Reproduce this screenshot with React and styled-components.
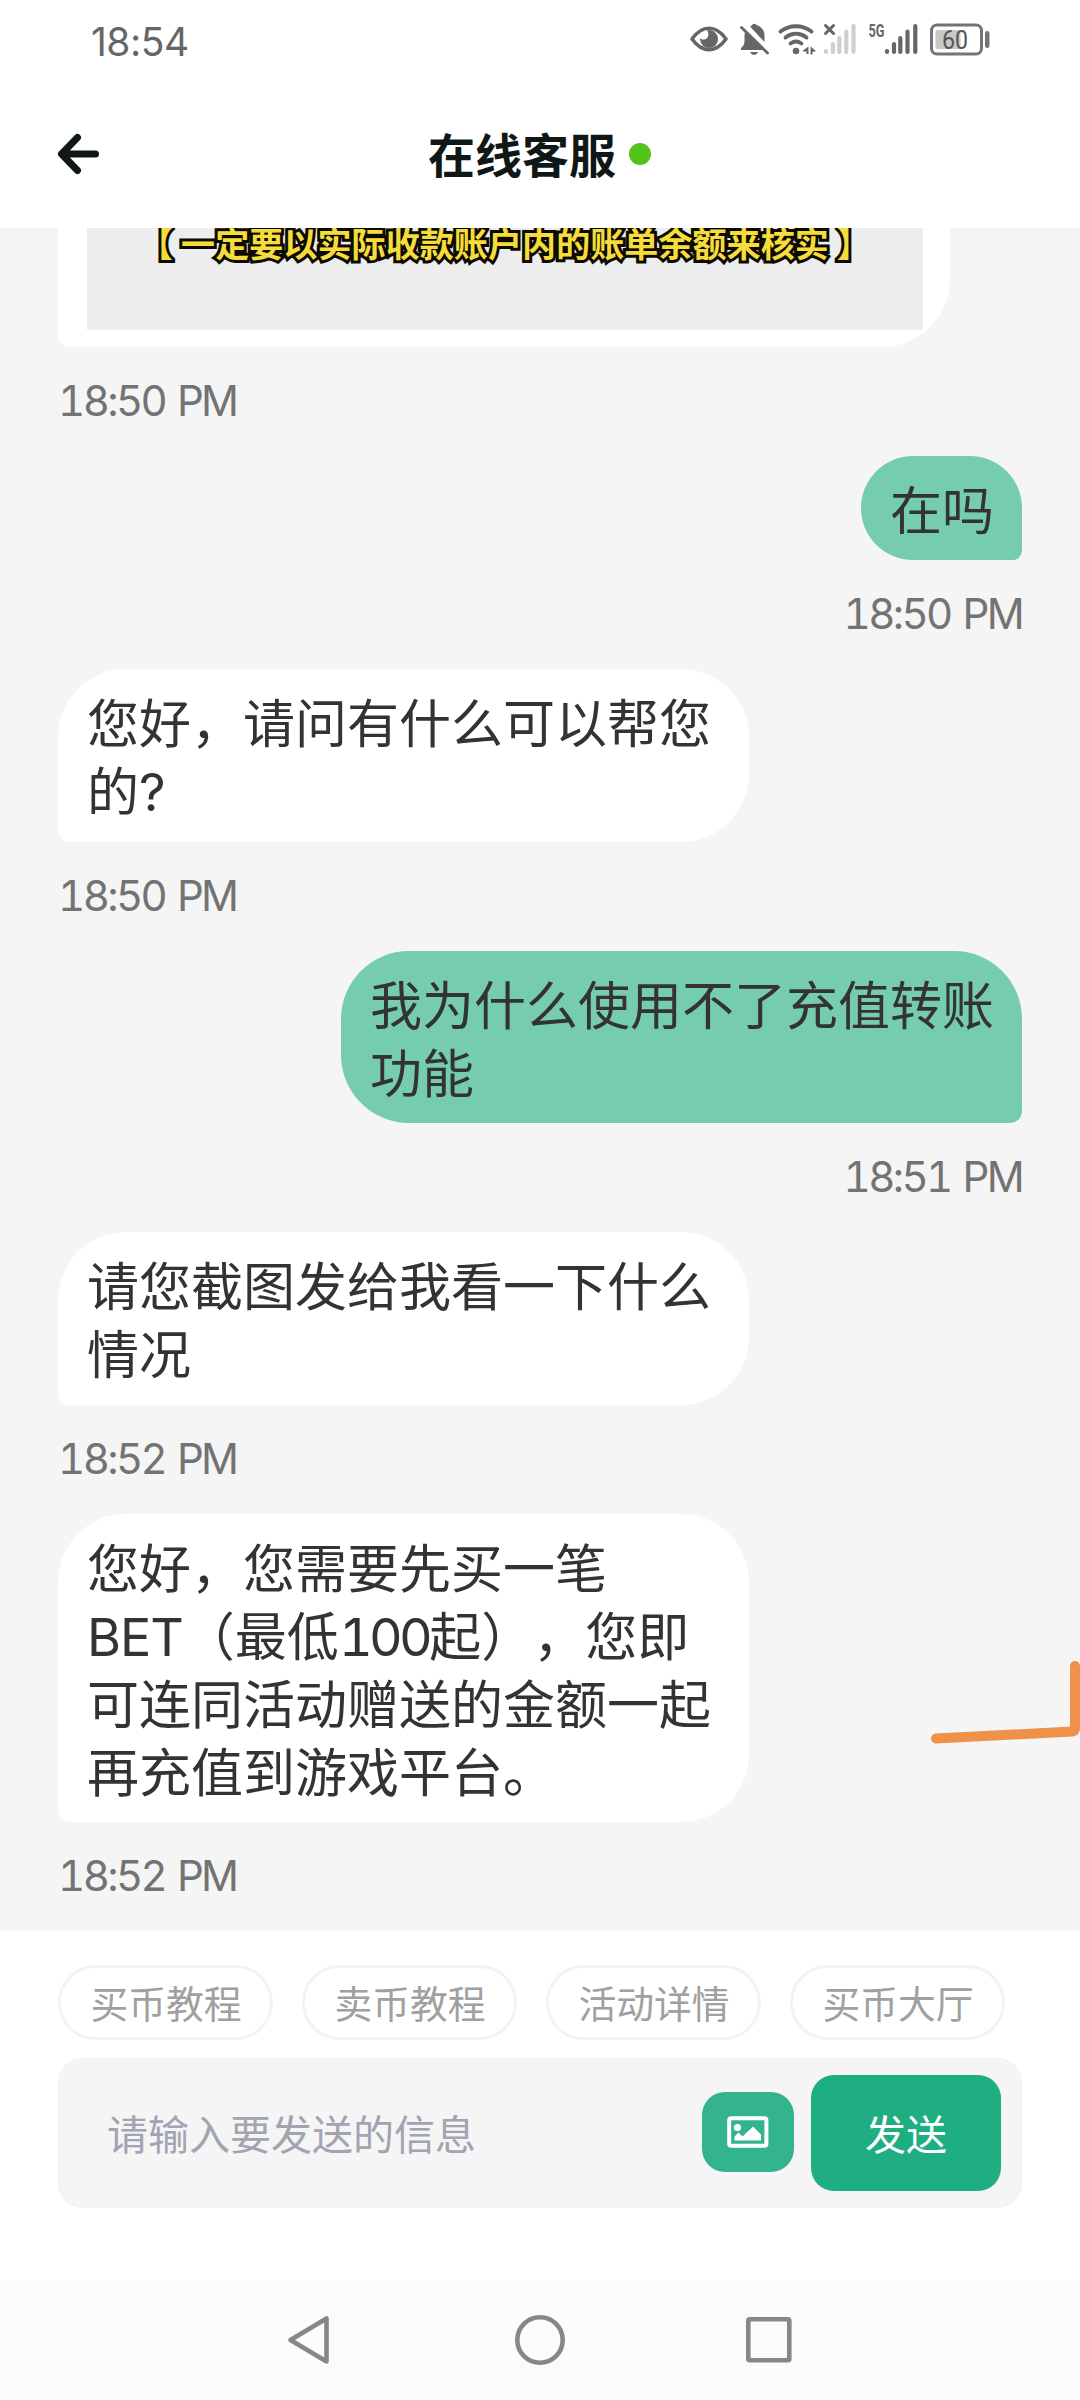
import React from "react";
import styled, { createGlobalStyle } from "styled-components";

const messages = [
  { id: 1, mine: false, caption: true, time: "18:50 PM" },
  { id: 2, mine: true, lines: ["在吗"], time: "18:50 PM" },
  {
    id: 3,
    mine: false,
    lines: ["您好，请问有什么可以帮您", "的?"],
    time: "18:50 PM",
  },
  {
    id: 4,
    mine: true,
    lines: ["我为什么使用不了充值转账", "功能"],
    time: "18:51 PM",
  },
  {
    id: 5,
    mine: false,
    lines: ["请您截图发给我看一下什么", "情况"],
    time: "18:52 PM",
  },
  {
    id: 6,
    mine: false,
    lines: [
      "您好，您需要先买一笔",
      "BET（最低100起），您即",
      "可连同活动赠送的金额一起",
      "再充值到游戏平台。",
    ],
    time: "18:52 PM",
  },
];

const shortcuts = ["买币教程", "卖币教程", "活动详情", "买币大厅"];

// latin runs use their own face, the rest stays in the CJK one
const renderLine = (line) =>
  line.split(/([A-Z0-9?]+)/).map((part, i) =>
    i % 2 ? (
      <Latin key={i} $digits={/\d/.test(part)}>
        {part}
      </Latin>
    ) : (
      part
    )
  );

const StatusIcons = () => (
  <Icons>
    <svg width="50" height="34" viewBox="690 22 50 34">
      <path
        d="M692 39c5-7 10.500-10.700 17-10.700s12 3.700 17 10.700c-5 7-10.500 10.700-17 10.700s-12-3.700-17-10.700z"
        fill="none"
        stroke="#666"
        strokeWidth="3.600"
        strokeLinejoin="round"
      />
      <path
        d="M707 30.500c3 4 1 8.500-3 9-2 .2-3.500-.6-4-1.500 0 6 4 10 9 10s9-4 9-9-4-9-9-9z"
        fill="#666"
      />
    </svg>
    <svg width="38" height="34" viewBox="740 22 38 34">
      <path
        d="M750 26.500c1-.5 1.500-.6 2-1.500 1.500-1.600 3-1.600 4.500 0 5 1.500 8 5.500 8 11v6zM745.500 31.500 763.500 50H741v-2c2.500-2 3.500-4 3.500-7v-5c0-2 .3-3 1-4.500zM750 52h8c-1 2-2.500 2.800-4 2.800S751 54 750 52z"
        fill="#666"
      />
      <path
        d="m741.500 27.500 26 25.500"
        stroke="#666"
        strokeWidth="2.800"
        strokeLinecap="round"
      />
    </svg>
    <svg width="45" height="34" viewBox="778 22 45 34">
      <g fill="none" stroke="#666" strokeWidth="3.800" strokeLinecap="round">
        <path d="M780.500 31.500c9-7 22-7 31 0" />
        <path d="M785.500 37.500c6.500-5 14.500-5 21 0" />
        <path d="M790.500 43.500c3.500-2.500 7.500-2.500 11 0" />
      </g>
      <circle cx="796" cy="51" r="3.300" fill="#666" />
      <path
        d="M808.500 46.500v7.500h-2v-2.500h-3.500v-1zM810.500 46.500l5.500 4.500-3.500 1v2.500h-2z"
        fill="#666"
      />
    </svg>
    <svg width="45" height="34" viewBox="823 22 45 34">
      <path
        d="m825.500 25.500 8 8m0-8-8 8"
        stroke="#666"
        strokeWidth="3"
        strokeLinecap="round"
      />
      <path
        d="M826 51v1M833 44v8M839.300 38v14M846.300 31.500v20.500M853.500 26v26"
        stroke="#cfcfcf"
        strokeWidth="4.200"
        strokeLinecap="round"
      />
    </svg>
    <svg width="62" height="34" viewBox="868 22 62 34">
      <text
        x="868.500"
        y="37"
        fontFamily="Roboto, sans-serif"
        fontSize="18"
        fontWeight="700"
        fill="#666"
        textLength="16"
        lengthAdjust="spacingAndGlyphs"
      >
        5G
      </text>
      <path
        d="M887 51v1M894 44v8M900.300 38v14M907.500 31.500v20.500M915.300 26v26"
        stroke="#666"
        strokeWidth="4.200"
        strokeLinecap="round"
      />
    </svg>
    <svg width="60" height="34" viewBox="930 22 60 34">
      <rect
        x="931.500"
        y="25"
        width="50"
        height="29"
        rx="5.500"
        fill="none"
        stroke="#747474"
        strokeWidth="3"
      />
      <rect x="935.500" y="30" width="25" height="19" rx="2" fill="#c8c8c8" />
      <rect x="985" y="31" width="4.500" height="17" rx="2.200" fill="#747474" />
      <text
        x="942"
        y="49"
        fontFamily="Roboto, sans-serif"
        fontSize="25"
        fill="#555"
        textLength="26"
        lengthAdjust="spacingAndGlyphs"
      >
        60
      </text>
    </svg>
  </Icons>
);

const App = () => {
  return (
    <Page>
      <GlobalStyle />
      <StatusBar>
        <Clock>18:54</Clock>
        <StatusIcons />
      </StatusBar>
      <Header>
        <BackButton type="button">
          <svg width="44" height="42" viewBox="0 0 44 42">
            <path
              d="M38.500 21H5M20.500 4.500 4.500 21l16 16.500"
              fill="none"
              stroke="#101817"
              strokeWidth="7"
              strokeLinecap="round"
              strokeLinejoin="round"
            />
          </svg>
        </BackButton>
        <Title>在线客服</Title>
        <OnlineDot />
      </Header>
      <Chat>
        {messages.map(({ id, mine, caption, lines, time }) => (
          <Message key={id} $mine={mine}>
            {caption ? (
              <PictureBubble>
                <Picture>
                  <Bracket>【</Bracket>
                  一定要以实际收款账户内的账单余额来核实
                  <Bracket>】</Bracket>
                </Picture>
              </PictureBubble>
            ) : (
              <Bubble $mine={mine}>
                {lines.map((line) => (
                  <Line key={line}>{renderLine(line)}</Line>
                ))}
              </Bubble>
            )}
            <Time>{time}</Time>
          </Message>
        ))}
        <Scribble width="150" height="80" viewBox="930 1660 150 80">
          <path
            d="M936 1738.500 1072 1731.500Q1075 1731 1075 1728V1666"
            fill="none"
            stroke="#f0914a"
            strokeWidth="10"
            strokeLinecap="round"
          />
        </Scribble>
      </Chat>
      <Footer>
        <Shortcuts>
          {shortcuts.map((name) => (
            <Chip type="button" key={name}>
              {name}
            </Chip>
          ))}
        </Shortcuts>
        <InputBar>
          <Placeholder>请输入要发送的信息</Placeholder>
          <ImageButton type="button">
            <svg width="42" height="32" viewBox="0 0 42 32">
              <rect
                x="2.200"
                y="2.200"
                width="37.200"
                height="27.600"
                rx="1.800"
                fill="none"
                stroke="#fff"
                strokeWidth="4"
              />
              <circle cx="10.500" cy="11.500" r="3.600" fill="#fff" />
              <path
                d="M7.500 24.500v-4l4-4 4 4L26 10.500l8 8v6z"
                fill="#fff"
              />
            </svg>
          </ImageButton>
          <SendButton type="button">发送</SendButton>
        </InputBar>
      </Footer>
      <NavBar>
        <svg width="52" height="52" viewBox="0 0 52 52">
          <path d="M41.500 4.500v43L5.500 26z" />
        </svg>
        <svg width="52" height="52" viewBox="0 0 52 52">
          <circle cx="26" cy="26" r="22.700" />
        </svg>
        <svg width="52" height="52" viewBox="0 0 52 52">
          <rect x="5.300" y="5.300" width="41" height="41" rx="1.500" />
        </svg>
      </NavBar>
    </Page>
  );
};

const GlobalStyle = createGlobalStyle`
  * {
    box-sizing: border-box;
  }
  body {
    margin: 0;
    background: #fff;
    font-family: "Noto Sans CJK SC", sans-serif;
    text-spacing-trim: space-all;
  }
  button {
    border: none;
    padding: 0;
    font-family: inherit;
  }
`;

const Page = styled.div`
  display: flex;
  flex-direction: column;
  width: 1080px;
  height: 2400px;
  overflow: hidden;
`;

const StatusBar = styled.div`
  display: flex;
  align-items: center;
  justify-content: space-between;
  height: 80px;
  padding: 0 90px 0 91px;
  flex: none;
`;

const Clock = styled.span`
  padding-top: 2px;
  font-family: Inter, sans-serif;
  font-size: 39px;
  letter-spacing: -0.5px;
  color: #666;
`;

const Icons = styled.div`
  display: flex;
  align-items: center;
  padding-bottom: 2px;

  svg {
    overflow: visible;
  }
`;

const Header = styled.header`
  display: grid;
  grid-template-columns: 371px auto 1fr;
  align-items: center;
  height: 148px;
  padding: 0 58px 0 57px;
  flex: none;
`;

const BackButton = styled.button`
  display: flex;
  justify-self: start;
  background: none;
`;

const Title = styled.h1`
  margin: 0;
  padding-bottom: 2px;
  font-size: 47px;
  line-height: 60px;
  font-weight: 700;
  color: #101817;
`;

const OnlineDot = styled.span`
  width: 22px;
  height: 22px;
  margin-left: 13px;
  border-radius: 50%;
  background: #52c41a;
`;

const Chat = styled.main`
  position: relative;
  display: flex;
  flex-direction: column;
  justify-content: flex-end;
  height: 1703px;
  padding: 0 58px;
  overflow: hidden;
  background: #f5f5f5;
  flex: none;
`;

const Message = styled.section`
  display: flex;
  flex-direction: column;
  align-items: ${({ $mine }) => ($mine ? "flex-end" : "flex-start")};
  flex: none;
`;

const Bubble = styled.div`
  width: ${({ $mine }) => ($mine ? "auto" : "691px")};
  padding: 18px 28px 18.500px 29px;
  border-radius: ${({ $mine }) =>
    $mine ? "68px 68px 12px 68px" : "68px 68px 68px 12px"};
  background: ${({ $mine }) => ($mine ? "#76ccb1" : "#fff")};
`;

const Line = styled.p`
  margin: 0;
  height: 68px;
  font-size: 52px;
  line-height: 68px;
  white-space: nowrap;
  color: #333;
`;

const Latin = styled.span`
  font-family: Inter, sans-serif;
  font-variant-numeric: tabular-nums;
  letter-spacing: ${({ $digits }) => ($digits ? "-3.600px" : "-1px")};
`;

const Time = styled.time`
  height: 109px;
  font-family: Inter, sans-serif;
  font-size: 42px;
  line-height: 108px;
  font-variant-numeric: tabular-nums;
  letter-spacing: -2.600px;
  word-spacing: 3px;
  color: #737373;
`;

const PictureBubble = styled.div`
  width: 892px;
  padding: 17px 27px 17px 29px;
  border-radius: 68px 68px 68px 12px;
  background: #fff;
`;

const Picture = styled.div`
  display: flex;
  align-items: flex-end;
  justify-content: center;
  height: 300px;
  padding-bottom: 62px;
  background: #ededed;
  font-size: 34px;
  line-height: 50px;
  font-weight: 700;
  letter-spacing: 0.1px;
  white-space: nowrap;
  color: #f4dc3c;
  -webkit-text-stroke: 6px #0c0a00;
  paint-order: stroke fill;
  text-shadow: 1px 2px 0 #0c0a00;
`;

const Bracket = styled.span`
  flex: none;
  width: 42px;

  &:last-child {
    text-align: right;
  }
`;

const Scribble = styled.svg`
  position: absolute;
  right: 0;
  top: 1432px;
  overflow: visible;
`;

const Footer = styled.footer`
  height: 349px;
  padding: 34px 58px 0;
  background: #fff;
  flex: none;
`;

const Shortcuts = styled.div`
  display: flex;
  gap: 29px;
`;

const Chip = styled.button`
  width: 215px;
  height: 75px;
  padding: 0 0 2px 1px;
  border: 3px solid #f3f3f3;
  border-radius: 38px;
  background: #fff;
  font-size: 37.800px;
  line-height: 56px;
  color: #a0a0a0;
`;

const InputBar = styled.div`
  display: flex;
  align-items: center;
  height: 150px;
  margin-top: 18px;
  padding: 0 20px 0 48px;
  border: 1px solid #f1f1f1;
  border-radius: 24px;
  background: #f5f5f5;
`;

const Placeholder = styled.span`
  flex: 1;
  padding-bottom: 2px;
  font-size: 41px;
  line-height: 60px;
  color: #a1a4b1;
`;

const ImageButton = styled.button`
  display: flex;
  align-items: center;
  justify-content: center;
  width: 92px;
  height: 80px;
  margin: 0 17px 2px 0;
  border-radius: 23px;
  background: #33b48f;
`;

const SendButton = styled.button`
  width: 190px;
  height: 116px;
  padding-bottom: 2px;
  border-radius: 23px;
  background: #1eae82;
  font-size: 41px;
  line-height: 60px;
  color: #fff;
`;

const NavBar = styled.nav`
  display: flex;
  align-items: center;
  justify-content: center;
  gap: 177px;
  height: 120px;
  background: #fbfbfb;
  flex: none;

  svg {
    fill: none;
    stroke: #878787;
    stroke-width: 4.600px;
    stroke-linejoin: round;
  }
`;

export default App;
